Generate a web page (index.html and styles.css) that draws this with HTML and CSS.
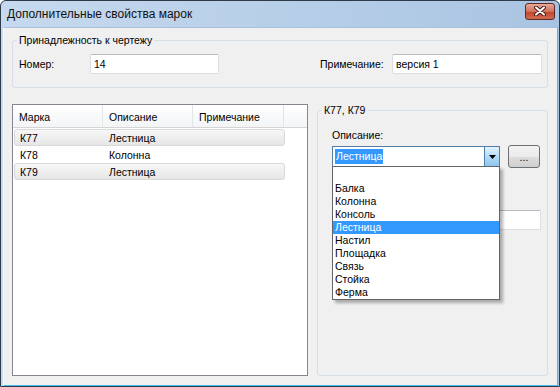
FILE: index.html
```html
<!DOCTYPE html>
<html lang="ru">
<head>
  <meta charset="UTF-8">
  <title>Дополнительные свойства марок</title>
  <link rel="stylesheet" href="styles.css">
</head>
<body>
  <div class="window">
    <div class="titlebar">
      <span class="title">Дополнительные свойства марок</span>
      <button type="button" class="close-btn">
        <svg width="14" height="10" viewBox="0 0 14 10">
          <path d="M3 1.5 L11 8.5 M11 1.5 L3 8.5" stroke="#4a1b16" stroke-width="4" stroke-linecap="round"/>
          <path d="M3 1.5 L11 8.5 M11 1.5 L3 8.5" stroke="#fff" stroke-width="2" stroke-linecap="round"/>
        </svg>
      </button>
    </div>

    <div class="client">
      <fieldset class="group drawing-group">
        <legend>Принадлежность к чертежу</legend>
        <div class="drawing-row">
          <label class="lbl-num" for="num">Номер:</label>
          <input type="text" id="num" class="edit edit-num" value="14">
          <label class="lbl-note" for="note">Примечание:</label>
          <input type="text" id="note" class="edit edit-note" value="версия 1">
        </div>
      </fieldset>

      <div class="bottom">
        <div class="listview">
          <div class="lv-header">
            <div class="lv-col">Марка</div>
            <div class="lv-col">Описание</div>
            <div class="lv-col">Примечание</div>
            <div class="lv-col lv-rest"></div>
          </div>
          <div class="lv-body">
            <div class="lv-row selected"><span>К77</span><span>Лестница</span><span></span></div>
            <div class="lv-row"><span>К78</span><span>Колонна</span><span></span></div>
            <div class="lv-row selected"><span>К79</span><span>Лестница</span><span></span></div>
          </div>
        </div>

        <fieldset class="group marks-group">
          <legend>К77, К79</legend>
          <div class="field-label">Описание:</div>
          <div class="combo-row">
            <div class="combo">
              <span class="combo-text"><span class="sel">Лестница</span></span>
              <span class="combo-arrow">
                <svg width="7" height="4" viewBox="0 0 7 4"><path d="M0 0 H7 L3.5 4 Z" fill="#000"/></svg>
              </span>
              <ul class="dropdown">
                <li>&nbsp;</li>
                <li>Балка</li>
                <li>Колонна</li>
                <li>Консоль</li>
                <li class="hot">Лестница</li>
                <li>Настил</li>
                <li>Площадка</li>
                <li>Связь</li>
                <li>Стойка</li>
                <li>Ферма</li>
              </ul>
            </div>
            <button type="button" class="dots-btn">...</button>
          </div>
          <input type="text" class="edit edit-hidden" value="">
        </fieldset>
      </div>
    </div>
  </div>
</body>
</html>
```

FILE: styles.css
```css
* {
  box-sizing: border-box;
}
body {
  margin: 0;
  font-family: 'Liberation Sans', Arial, sans-serif;
  font-size: 10.5px;
  color: #000;
  background: #fff;
}
.window {
  width: 560px;
  height: 387px;
  display: flex;
  flex-direction: column;
  border: 1px solid #2e3a48;
  border-radius: 6px 6px 0 0;
  padding: 0 1px 0 2px;
  background: linear-gradient(to right, #c6d9ee, #a9c4e2);
}
.titlebar {
  height: 26px;
  display: flex;
  align-items: center;
  justify-content: space-between;
  padding-left: 4px;
}
.title {
  font-size: 12px;
  color: #111;
  margin-top: -1px;
}
.close-btn {
  width: 30px;
  height: 17px;
  margin-top: -6px;
  margin-right: 3px;
  padding: 0;
  border: 1px solid #5e2a24;
  border-radius: 3px;
  background: linear-gradient(#e9a99a, #d0715c 50%, #c0432a 51%, #d06c52);
  display: flex;
  align-items: center;
  justify-content: center;
}
.client {
  flex: 1;
  background: #f0f0f0;
  border: 1px solid #46c2ea;
  border-left-color: #f9f9f9;
  border-top-color: #a7c0dc;
  padding: 6px 9px 9px 8px;
  display: flex;
  flex-direction: column;
}
.group {
  margin: 0;
  min-width: 0;
  border: 1px solid #d5dfe5;
  border-radius: 3px;
}
.group legend {
  padding: 0 2px;
  margin-left: -2px;
  line-height: 13px;
}
.drawing-group {
  padding: 7px 5px 13px 6px;
}
.drawing-row {
  display: flex;
  align-items: center;
}
.lbl-num {
  width: 71px;
}
.lbl-note {
  width: 72px;
  margin-left: auto;
}
.edit {
  height: 20px;
  border: 1px solid #dadde2;
  border-top-color: #b5b9c0;
  border-radius: 2px;
  padding: 0 3px;
  font: inherit;
  background: #fff;
}
.edit-num {
  width: 129px;
}
.edit-note {
  width: 150px;
}

.bottom {
  flex: 1;
  display: flex;
  gap: 9px;
  margin-top: 16px;
}
.listview {
  width: 296px;
  border: 1px solid #828790;
  background: #fff;
}
.lv-header {
  display: flex;
  height: 23px;
  background: linear-gradient(#fff, #f3f4f6);
  border-bottom: 1px solid #d5d5d5;
}
.lv-col {
  width: 90px;
  padding-left: 6px;
  line-height: 24px;
  border-right: 1px solid #e3e5e8;
}
.lv-col:nth-child(3) {
  width: 91px;
}
.lv-rest {
  flex: 1;
  border-right: none;
}
.lv-body {
  padding-top: 1px;
}
.lv-row {
  width: 271px;
  height: 17px;
  margin-left: 1px;
  display: grid;
  grid-template-columns: 89px 90px 90px;
  align-items: center;
  border: 1px solid transparent;
  border-radius: 3px;
}
.lv-row span {
  padding-left: 5px;
}
.lv-row.selected {
  border-color: #d9d9d9;
  background: linear-gradient(#f7f7f7, #e6e6e6);
}

.marks-group {
  flex: 1;
  padding: 12px 6px 0 14px;
}
.marks-group legend {
  margin-left: -10px;
}
.field-label {
  line-height: 13px;
}
.combo-row {
  display: flex;
  align-items: center;
  margin-top: 3px;
}
.combo {
  position: relative;
  width: 168px;
  height: 21px;
  border: 1px solid #4f7ea9;
  background: #fff;
  display: flex;
}
.combo-text {
  flex: 1;
  padding: 2px 2px;
}
.sel {
  display: inline-block;
  background: #3399ff;
  color: #fff;
  line-height: 15px;
  padding: 0 1px;
}
.combo-arrow {
  width: 15px;
  border-left: 1px solid #4f7ea9;
  background: linear-gradient(#e4f2fc, #b4dbf6 50%, #8dc6ee);
  display: flex;
  align-items: center;
  justify-content: center;
}
.dropdown {
  position: absolute;
  top: 19px;
  left: -1px;
  width: 168px;
  height: 134px;
  margin: 0;
  padding: 2px 0 0;
  list-style: none;
  background: #fff;
  border: 1px solid #646464;
  box-shadow: 3px 3px 3px rgba(0, 0, 0, 0.3);
  z-index: 2;
}
.dropdown li {
  height: 13px;
  line-height: 13px;
  padding-left: 2px;
}
.dropdown li.hot {
  background: #3399ff;
  color: #fff;
}
.dots-btn {
  width: 32px;
  height: 23px;
  margin-left: 8px;
  padding: 0;
  border: 1px solid #707070;
  border-radius: 3px;
  background: linear-gradient(#f2f2f2, #ebebeb 50%, #dddddd 51%, #cfcfcf);
  font: inherit;
  line-height: 10px;
}
.edit-hidden {
  display: block;
  width: 209px;
  margin-top: 42px;
}
```
